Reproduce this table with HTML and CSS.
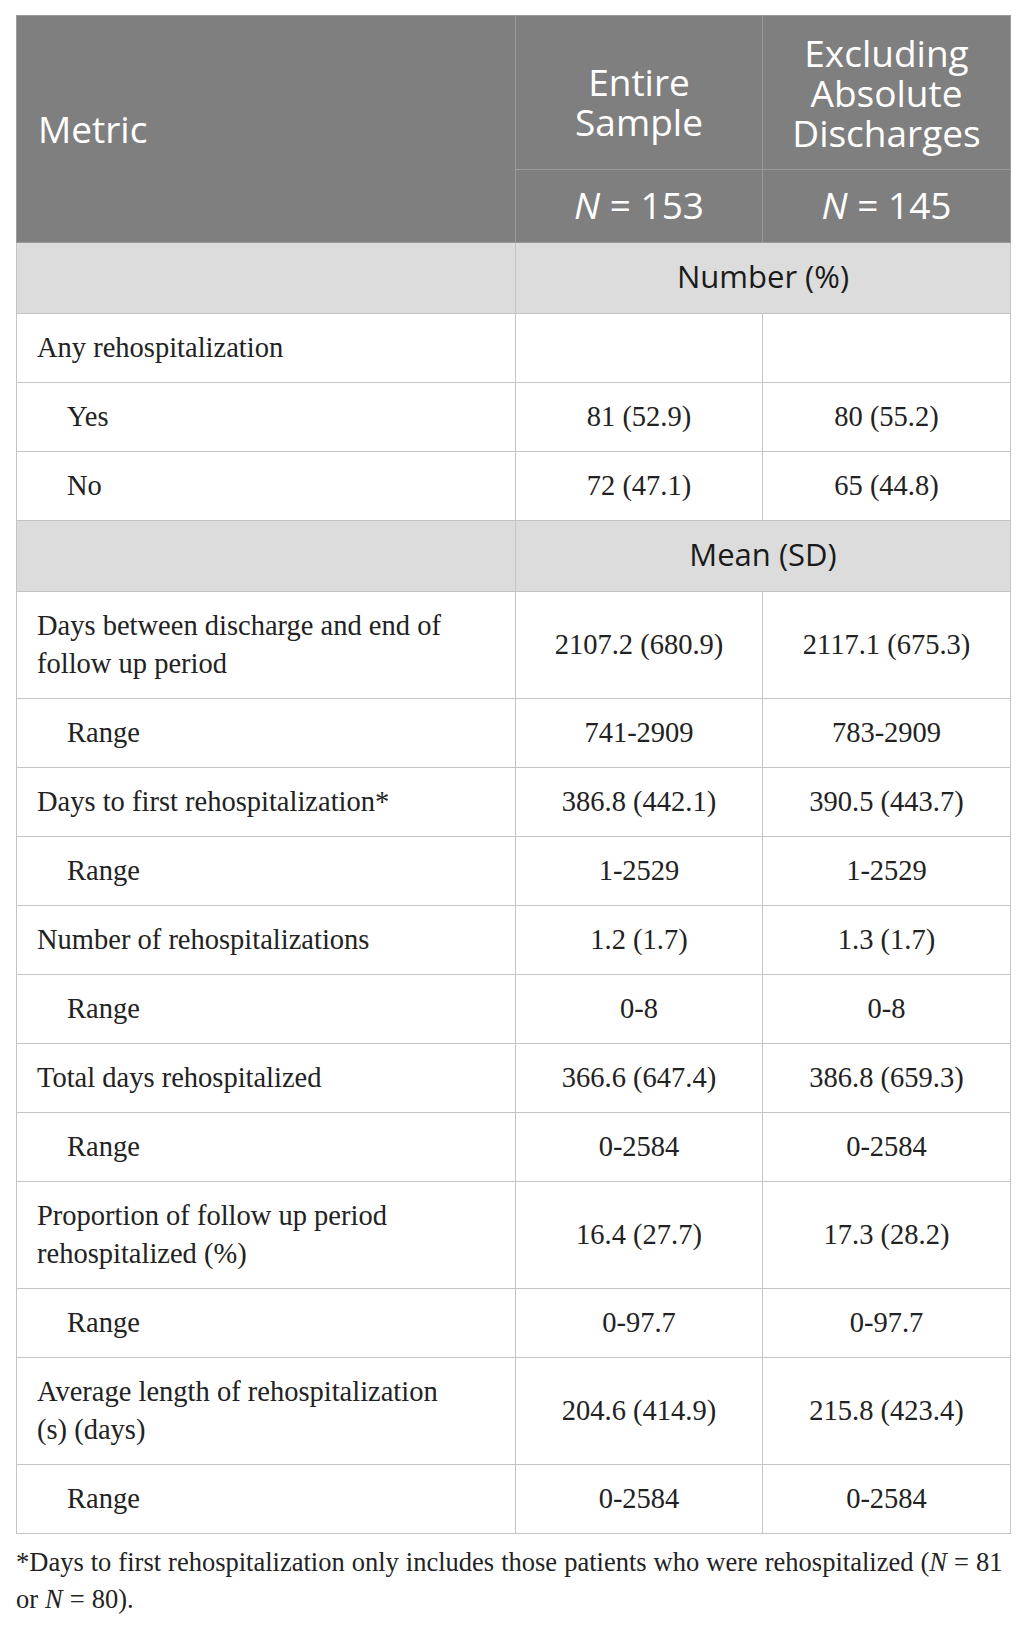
FILE: index.html
```html
<!DOCTYPE html>
<html lang="en">
<head>
<meta charset="utf-8">
<title>Rehospitalization metrics</title>
<link rel="stylesheet" href="styles.css">
</head>
<body>
<div class="page">
  <table class="data">
    <colgroup>
      <col class="c-metric">
      <col class="c-val">
      <col class="c-val-last">
    </colgroup>
    <thead>
      <tr class="h1">
        <th rowspan="2" class="metric-h">Metric</th>
        <th class="val-h low">Entire<br>Sample</th>
        <th class="val-h">Excluding<br>Absolute<br>Discharges</th>
      </tr>
      <tr class="h2">
        <th class="val-h n-h"><i>N</i> = 153</th>
        <th class="val-h n-h"><i>N</i> = 145</th>
      </tr>
    </thead>
    <tbody>
      <tr class="sub">
        <td></td>
        <td colspan="2">Number (%)</td>
      </tr>
      <tr><td class="lbl">Any rehospitalization</td><td></td><td></td></tr>
      <tr><td class="lbl ind">Yes</td><td>81 (52.9)</td><td>80 (55.2)</td></tr>
      <tr><td class="lbl ind">No</td><td>72 (47.1)</td><td>65 (44.8)</td></tr>
      <tr class="sub">
        <td></td>
        <td colspan="2">Mean (SD)</td>
      </tr>
      <tr><td class="lbl">Days between discharge and end of follow up period</td><td>2107.2 (680.9)</td><td>2117.1 (675.3)</td></tr>
      <tr><td class="lbl ind">Range</td><td>741-2909</td><td>783-2909</td></tr>
      <tr><td class="lbl">Days to first rehospitalization*</td><td>386.8 (442.1)</td><td>390.5 (443.7)</td></tr>
      <tr><td class="lbl ind">Range</td><td>1-2529</td><td>1-2529</td></tr>
      <tr><td class="lbl">Number of rehospitalizations</td><td>1.2 (1.7)</td><td>1.3 (1.7)</td></tr>
      <tr><td class="lbl ind">Range</td><td>0-8</td><td>0-8</td></tr>
      <tr><td class="lbl">Total days rehospitalized</td><td>366.6 (647.4)</td><td>386.8 (659.3)</td></tr>
      <tr><td class="lbl ind">Range</td><td>0-2584</td><td>0-2584</td></tr>
      <tr><td class="lbl">Proportion of follow up period rehospitalized (%)</td><td>16.4 (27.7)</td><td>17.3 (28.2)</td></tr>
      <tr><td class="lbl ind">Range</td><td>0-97.7</td><td>0-97.7</td></tr>
      <tr><td class="lbl">Average length of rehospitalization (s) (days)</td><td>204.6 (414.9)</td><td>215.8 (423.4)</td></tr>
      <tr><td class="lbl ind">Range</td><td>0-2584</td><td>0-2584</td></tr>
    </tbody>
  </table>
  <p class="note">*Days to first rehospitalization only includes those patients who were rehospitalized (<i>N</i> = 81 or <i>N</i> = 80).</p>
</div>
</body>
</html>
```

FILE: styles.css
```css
html, body {
  margin: 0;
  padding: 0;
  background: #ffffff;
}

.page {
  padding: 15px 16px 0 16px;
}

.data {
  width: 994px;
  border-collapse: collapse;
  table-layout: fixed;
  border: 1px solid #b4b4b4;
}

.c-metric { width: 499px; }
.c-val { width: 247px; }
.c-val-last { width: 248px; }

.data th {
  background: #7f7f80;
  color: #ffffff;
  font-family: "Open Sans", "Liberation Sans", sans-serif;
  font-weight: 400;
  font-size: 37px;
  line-height: 40px;
  border: 1px solid #9a9a9a;
  vertical-align: middle;
}

.h1 th {
  height: 120px;
  padding: 16px 6px 16px;
}

.h1 th.low {
  padding-top: 26px;
  padding-bottom: 7px;
}

.h2 th {
  height: 40px;
  padding: 15px 6px 17px;
}

.metric-h {
  text-align: left;
  padding-left: 21px !important;
}

.val-h {
  text-align: center;
}

.n-h i {
  font-style: italic;
}

.data td {
  font-family: "Liberation Serif", "Times New Roman", serif;
  font-size: 28.5px;
  line-height: 38px;
  color: #222222;
  border: 1px solid #c4c4c4;
  padding: 15px 10px;
  text-align: center;
  vertical-align: middle;
}

.data td.lbl {
  text-align: left;
  padding-left: 20px;
  padding-right: 50px;
}

.data td.ind {
  padding-left: 50px;
}

.data tr.sub td {
  background: #dcdcdc;
  font-family: "Open Sans", "Liberation Sans", sans-serif;
  font-size: 31px;
  line-height: 40px;
  color: #1a1a1a;
  padding: 13px 10px 17px;
}

.note {
  margin: 10px 0 0;
  font-family: "Liberation Serif", "Times New Roman", serif;
  font-size: 26.5px;
  line-height: 37px;
  word-spacing: 0.4px;
  color: #222222;
}

.note i {
  font-style: italic;
}
```
